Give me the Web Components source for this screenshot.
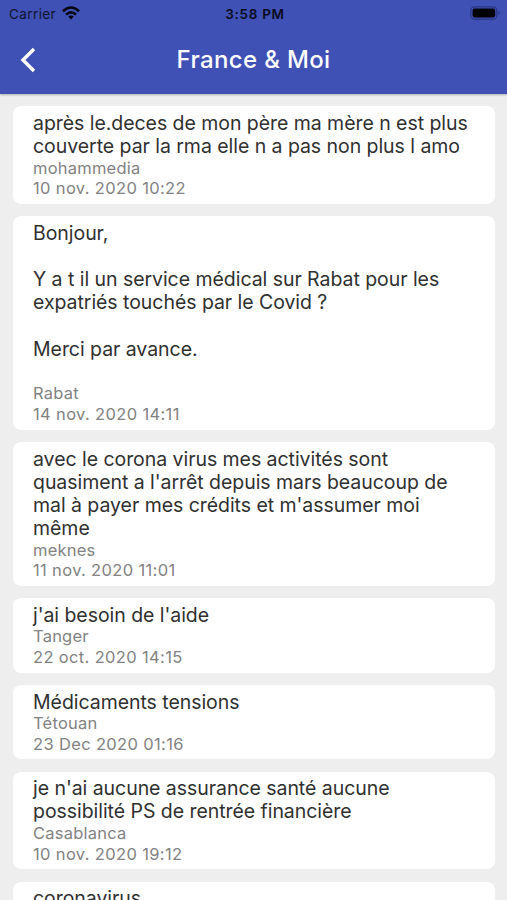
<!DOCTYPE html>
<html lang="fr"><head><meta charset="utf-8"><title>France &amp; Moi</title>
<style>html,body{margin:0;height:100%;overflow:hidden;background:#eee}body{font-family:Inter,"Liberation Sans",sans-serif}</style></head>
<body><app-screen></app-screen>
<script>
const define=(name,html,ready)=>customElements.define(name,class extends HTMLElement{
 constructor(){super();this.attachShadow({mode:'open'}).innerHTML=html;}
 connectedCallback(){if(ready)ready(this);}
});
define('status-bar',`<style>
:host{display:grid;grid-template-columns:1fr auto 1fr;align-items:center;height:26px;padding:0 6px 0 9px;color:#10142e;font-size:13.5px;box-sizing:border-box}
.left{display:flex;align-items:center;gap:6px}.time{font-weight:600;letter-spacing:.7px;color:#080a1c;padding-top:2px}.battery{justify-self:end}svg{display:block}
.carrier{letter-spacing:.4px;padding-top:2px}
</style><div class="left"><span class="carrier">Carrier</span>
<svg width="18" height="14" viewBox="0 0 18 14" fill="none" stroke="#05060d" stroke-width="2.6"><path d="M1 5.2Q9-2.2 17 5.2"/><path d="M4 8.6Q9 4 14 8.6"/><path d="M9 13.4 6.2 10.6Q9 8.2 11.8 10.6Z" fill="#05060d" stroke="none"/></svg></div>
<span class="time">3:58 PM</span>
<svg class="battery" width="31" height="14" viewBox="0 0 31 14"><rect x=".8" y=".8" width="26" height="12.4" rx="3.6" fill="none" stroke="#2b3680" stroke-width="1.2"/><rect x="2.6" y="2.4" width="22.6" height="9.2" rx="2" fill="#020205"/><path d="M28.4 4.8q2.4 2.2 0 4.4z" fill="#2b3680"/></svg>`);
define('nav-bar',`<style>
:host{display:grid;grid-template-columns:48px 1fr 48px;align-items:center;height:67px;color:#fff}
svg{margin-left:20px;display:block}h1{margin:0;padding-top:1px;text-align:center;font-size:24px;font-weight:500;line-height:30px;letter-spacing:.36px}
</style><svg width="17" height="26" viewBox="0 0 17 26" fill="none" stroke="#fff" stroke-width="3.4"><path d="M14 2 3 13l11 11"/></svg><h1><slot></slot></h1>`);
define('message-card',`<style>
:host{display:block;box-sizing:border-box;background:#fff;border-radius:8px;padding:5.5px 20px 4.9px}
.body{color:#303030;font-size:19.5px;letter-spacing:-.05px;line-height:23.2px;white-space:pre;margin-bottom:-.6px}
.meta{color:#828282;font-size:16.5px;line-height:20.7px;white-space:pre}
.place{letter-spacing:.22px}.date{letter-spacing:.35px}
</style><div class="body"><slot></slot></div><div class="meta place"></div><div class="meta date"></div>`,
 el=>{for(const k of ['place','date'])el.shadowRoot.querySelector('.'+k).textContent=el.getAttribute(k)||'';});
define('app-screen',`<style>
:host{display:flex;flex-direction:column;height:900px;overflow:hidden}
header{background:#3f51b5;height:94px;flex:none;box-shadow:0 1px 2px #0004}
main{display:flex;flex-direction:column;gap:12.3px;padding:12.2px 12.5px 0 13px}
message-card{flex:none}
</style><header><status-bar></status-bar><nav-bar>France &amp; Moi</nav-bar></header><main>
<message-card place="mohammedia" date="10 nov. 2020 10:22">après le.deces de mon père ma mère n est plus
couverte par la rma elle n a pas non plus l amo</message-card>
<message-card place="Rabat" date="14 nov. 2020 14:11">Bonjour,

Y a t il un service médical sur Rabat pour les
expatriés touchés par le Covid ?

Merci par avance.

</message-card>
<message-card place="meknes" date="11 nov. 2020 11:01">avec le corona virus mes activités sont
quasiment a l'arrêt depuis mars beaucoup de
mal à payer mes crédits et m'assumer moi
même</message-card>
<message-card place="Tanger" date="22 oct. 2020 14:15">j'ai besoin de l'aide</message-card>
<message-card place="Tétouan" date="23 Dec 2020 01:16">Médicaments tensions</message-card>
<message-card place="Casablanca" date="10 nov. 2020 19:12">je n'ai aucune assurance santé aucune
possibilité PS de rentrée financière</message-card>
<message-card>coronavirus</message-card></main>`);
</script></body></html>
